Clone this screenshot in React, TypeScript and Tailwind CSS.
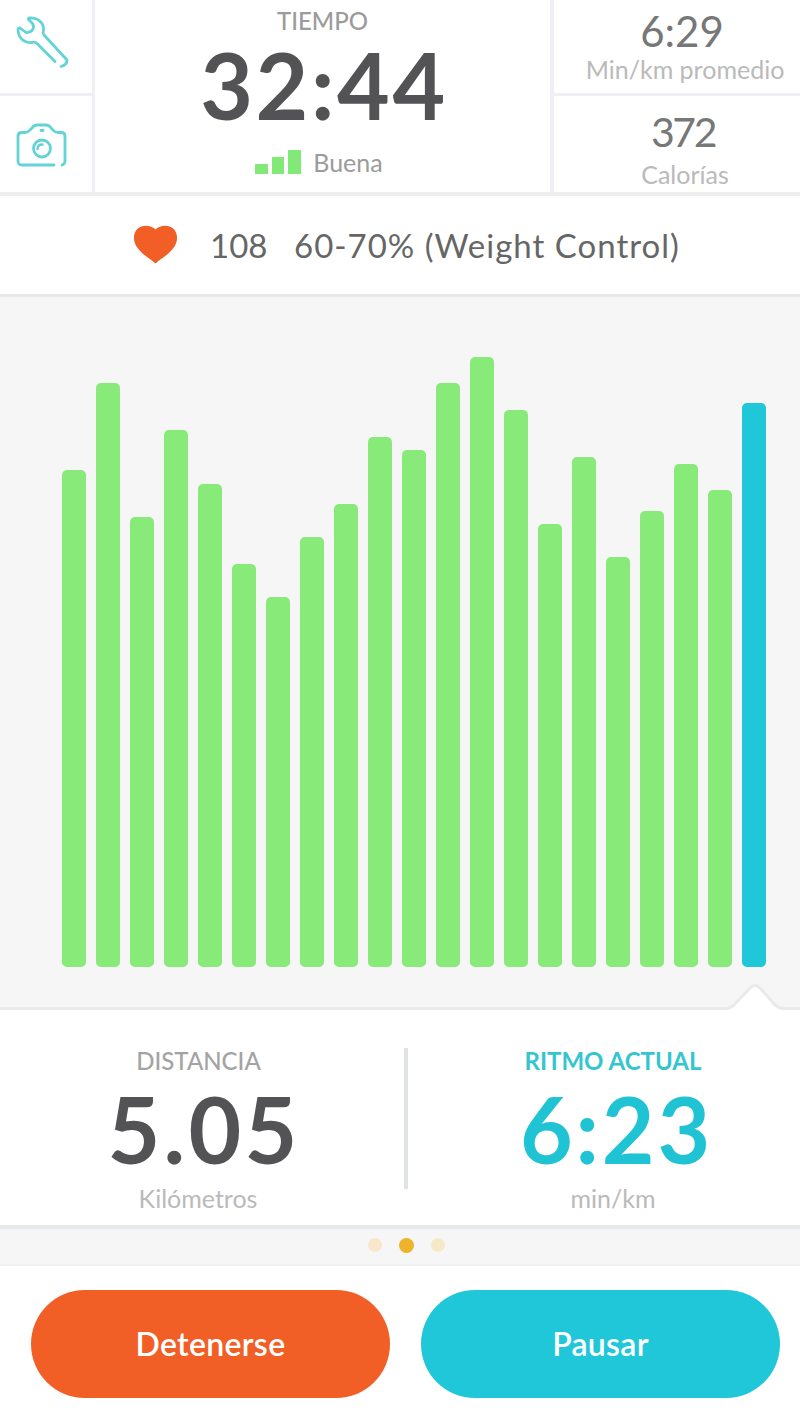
const BARS = [
  470, 383, 517, 430, 484, 564, 597, 537, 504, 437, 450, 383, 357, 410, 524, 457, 557, 511, 464, 490, 403,
].map((top) => 967 - top);

function Wrench() {
  return (
    <svg width="58" height="58" viewBox="0 0 58 58" fill="none" stroke="#62d3d6" strokeWidth="2.8" strokeLinecap="round" strokeLinejoin="round">
      <path d="M48 53.500Q54 52 54 47L31 22Q29.500 20 30.500 17C31 10 25 4.500 16 5Q14.500 5.500 16 7L19.500 10.500Q21.500 14 19.500 17Q17 20 13 19.500L7 15Q5 14.500 5 17C5.500 25 11 30 19 29.500Q22 28.500 24 30.500L42 48.500" />
    </svg>
  );
}

function Camera() {
  return (
    <svg width="54" height="48" viewBox="0 0 54 48" fill="none" stroke="#62d3d6" strokeWidth="2.8" strokeLinecap="round" strokeLinejoin="round">
      <path d="M39 44H7Q3 44 3 40V15Q3 11.500 7 11.500H10Q13 11.500 15 9L17 7Q19 4 22 4H31Q34 4 36 7L38 9Q40 11.500 43 11.500H46Q50 11.500 50 15V40Q50 43 47 44" />
      <circle cx="27" cy="27.500" r="8.500" />
      <path d="M22.500 28Q22.500 23.500 27.500 23.500" strokeWidth="2.500" />
      <path d="M26 9.500H28" />
    </svg>
  );
}

export default function App() {
  return (
    <div className="flex h-[1421px] w-[800px] flex-col overflow-hidden bg-white font-['Lato',sans-serif] text-[#535355]">
      <header className="flex h-[196px] shrink-0 border-b-4 border-[#eceef0]">
        <div className="flex w-[95px] flex-col border-r-3 border-[#eef0f3]">
          <div className="h-[96px] border-b-3 border-[#eef0f3] pt-[13px] pl-[13px]">
            <Wrench />
          </div>
          <div className="pt-[25px] pl-[15px]">
            <Camera />
          </div>
        </div>
        <div className="flex w-[455px] flex-col items-center pt-[6px]">
          <div className="h-[30px] text-[24px] leading-[30px] font-medium whitespace-nowrap text-[#9b9b9b]">TIEMPO</div>
          <div className="h-[100px] pl-[3px] text-[91px] leading-[98px] font-bold tracking-[2.6px] whitespace-nowrap">32:44</div>
          <div className="mt-[11px] flex h-[30px] items-center pr-[7px]">
            <div className="mb-[1px] flex h-[24px] items-end gap-[4px]">
              <div className="h-[10px] w-[13px] bg-[#82e877]" />
              <div className="h-[17px] w-[12px] bg-[#82e877]" />
              <div className="h-[24px] w-[13px] bg-[#82e877]" />
            </div>
            <div className="ml-[12px] text-[25px] leading-[30px] whitespace-nowrap text-[#9b9b9b]">Buena</div>
          </div>
        </div>
        <div className="flex w-[250px] flex-col border-l-4 border-[#eef0f3]">
          <div className="flex h-[96px] flex-col items-center border-b-3 border-[#eef0f3] pt-[6px] pl-[12px]">
            <div className="h-[50px] pr-[2px] text-[42px] leading-[50px] whitespace-nowrap text-[#777]">6:29</div>
            <div className="h-[28px] pl-[4px] text-[25px] leading-[26px] whitespace-nowrap text-[#bababa]">Min/km promedio</div>
          </div>
          <div className="flex flex-col items-center pt-[11px] pl-[12px]">
            <div className="h-[50px] text-[41px] leading-[49px] tracking-[-2.5px] whitespace-nowrap text-[#777]">372</div>
            <div className="mt-[3px] h-[28px] pl-[4px] text-[25px] leading-[28px] whitespace-nowrap text-[#bababa]">Calorías</div>
          </div>
        </div>
      </header>

      <section className="flex h-[101px] shrink-0 items-center border-b-3 border-[#e8e8e8] pb-[1px] pl-[133px] text-[33px] leading-[40px] whitespace-nowrap text-[#666]">
        <svg width="45" height="39" viewBox="0 0 45 39" fill="#f15f27" className="shrink-0">
          <path d="M22.500 38.500C17 33.500 11 31 5 23.500C-1 16 0 7 5.500 3C11-.500 18 .500 22.500 4.500C27 .500 34-.500 39.500 3C45 7 46 16 40 23.500C34 31 28 33.500 22.500 38.500Z" />
        </svg>
        <span className="ml-[32px] w-[84px]">108</span>
        <span className="tracking-[1px]">60-70% (Weight Control)</span>
      </section>

      <section className="flex h-[714px] shrink-0 flex-col justify-between bg-[#f6f6f7]">
        <div className="mt-[60px] flex h-[610px] items-end gap-[10px] pl-[62px]">
          {BARS.map((height, i) => (
            <div
              key={i}
              className={i === BARS.length - 1 ? "w-[24px] rounded-[5px] bg-[#1fc7d9]" : "w-[24px] rounded-[5px] bg-[#88ea79]"}
              style={{ height }}
            />
          ))}
        </div>
        <svg width="800" height="32" viewBox="0 0 800 32">
          <path d="M-3 29.500H725Q731 29.500 735 25L750 9Q755 4 760 9L774 25Q778 29.500 784 29.500H803V36H-3Z" fill="#fff" stroke="#e8eaeb" strokeWidth="3" />
        </svg>
      </section>

      <section className="flex h-[218px] shrink-0 border-b-4 border-[#e6eaed]">
        <div className="flex w-[404px] flex-col items-center pt-[35px]">
          <div className="h-[30px] pr-[7px] text-[24px] leading-[30px] font-medium whitespace-nowrap text-[#a3a3a3]">DISTANCIA</div>
          <div className="mt-[3px] h-[100px] pl-[4px] text-[91px] leading-[100px] font-bold tracking-[3.2px] whitespace-nowrap">5.05</div>
          <div className="mt-[5px] h-[28px] pr-[8px] text-[25px] leading-[28px] whitespace-nowrap text-[#bababa]">Kilómetros</div>
        </div>
        <div className="mt-[37px] h-[141px] w-[4px] bg-[#dfe3e5]" />
        <div className="flex w-[392px] flex-col items-center pt-[35px] pl-[18px]">
          <div className="h-[30px] text-[24px] leading-[30px] font-bold whitespace-nowrap text-[#35c5cf]">RITMO ACTUAL</div>
          <div className="mt-[3px] h-[100px] pl-[7px] text-[91px] leading-[100px] font-bold tracking-[2.8px] whitespace-nowrap text-[#20c3d3]">6:23</div>
          <div className="mt-[5px] h-[28px] text-[25px] leading-[28px] whitespace-nowrap text-[#bababa]">min/km</div>
        </div>
      </section>

      <div className="flex h-[37px] shrink-0 items-center justify-center gap-[17px] border-b-2 border-[#f1f1f4] bg-[#f6f6f7] pb-[3px] pl-[12px]">
        <div className="size-[14px] rounded-full bg-[#f8e6cd]" />
        <div className="size-[15px] rounded-full bg-[#edb32c]" />
        <div className="size-[14px] rounded-full bg-[#f5e9c8]" />
      </div>

      <footer className="flex gap-[31px] pt-[24px] pl-[31px] text-[32px] font-semibold tracking-[0.3px] text-white">
        <button className="flex h-[108px] w-[359px] items-center justify-center rounded-full bg-[#f15f27]">Detenerse</button>
        <button className="flex h-[108px] w-[359px] items-center justify-center rounded-full bg-[#1fc7d9]">Pausar</button>
      </footer>
    </div>
  );
}
